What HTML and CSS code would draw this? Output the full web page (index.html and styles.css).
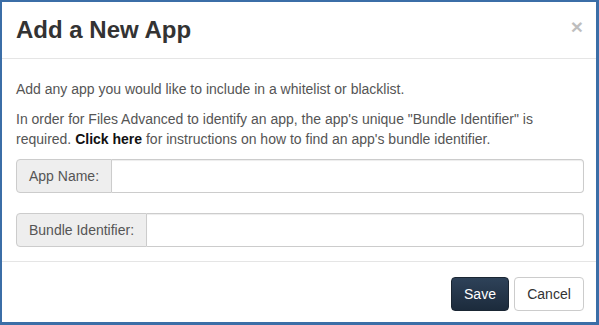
FILE: index.html
```html
<!DOCTYPE html>
<html>
<head>
<meta charset="utf-8">
<link rel="stylesheet" href="styles.css">
</head>
<body>
<div class="modal">
  <div class="modal-header">
    <button class="close" type="button">&times;</button>
    <h4 class="modal-title">Add a New App</h4>
  </div>
  <div class="modal-body">
    <p>Add any app you would like to include in a whitelist or blacklist.</p>
    <p>In order for Files Advanced to identify an app, the app's unique "Bundle Identifier" is required. <a class="link" href="#">Click here</a> for instructions on how to find an app's bundle identifier.</p>
    <div class="input-group first">
      <span class="addon">App Name:</span>
      <input class="field" type="text">
    </div>
    <div class="input-group">
      <span class="addon">Bundle Identifier:</span>
      <input class="field" type="text">
    </div>
  </div>
  <div class="modal-footer">
    <button class="btn btn-primary" type="button">Save</button>
    <button class="btn btn-default" type="button">Cancel</button>
  </div>
</div>
</body>
</html>
```
FILE: styles.css
```css
* { box-sizing: border-box; }
html, body { margin: 0; padding: 0; }
body {
  font-family: "Liberation Sans", Arial, sans-serif;
  font-size: 14px;
  line-height: 20px;
  color: #555;
  background: #fff;
}
.modal {
  width: 599px;
  height: 325px;
  border-style: solid;
  border-color: #3b6ea7;
  border-width: 2px 3px 3px 2px;
  background: #fff;
  display: flex;
  flex-direction: column;
}
.modal-header {
  padding: 15px 12px 15px 14px;
  border-bottom: 1px solid #e5e5e5;
  display: flex;
  flex-direction: row-reverse;
  justify-content: space-between;
  align-items: flex-start;
}
.modal-title {
  margin: 0;
  font-size: 24px;
  font-weight: bold;
  line-height: 26px;
  color: #333;
}
.close {
  background: none;
  border: 0;
  padding: 0;
  margin-top: -1px;
  margin-right: 1px;
  font-family: "Liberation Sans", Arial, sans-serif;
  font-size: 21px;
  font-weight: bold;
  line-height: 1;
  color: #000;
  opacity: 0.25;
  cursor: pointer;
}
.modal-body {
  padding: 20px 12px 14px 14px;
}
.modal-body p { margin: 0 0 10px; }
.link {
  color: #111;
  font-weight: bold;
  text-decoration: none;
}
.input-group {
  display: flex;
  height: 34px;
}
.input-group.first { margin-bottom: 20px; }
.addon {
  display: flex;
  align-items: center;
  padding: 0 12px;
  background: #eee;
  border: 1px solid #ccc;
  border-radius: 4px 0 0 4px;
  color: #555;
  white-space: nowrap;
}
.field {
  flex: 1;
  border: 1px solid #ccc;
  border-left: 0;
  border-radius: 0 4px 4px 0;
  box-shadow: inset 0 1px 1px rgba(0,0,0,.075);
  font-family: inherit;
  font-size: 14px;
  padding: 6px 12px;
  min-width: 0;
}
.modal-footer {
  border-top: 1px solid #e5e5e5;
  padding: 15px 12px 15px 14px;
  display: flex;
  justify-content: flex-end;
  gap: 5px;
}
.btn {
  height: 34px;
  padding: 6px 12px;
  font-family: "Liberation Sans", Arial, sans-serif;
  font-size: 14px;
  line-height: 20px;
  border-radius: 4px;
  border: 1px solid #ccc;
  cursor: pointer;
}
.btn-primary {
  background: linear-gradient(#2e4259, #1c2b3c);
  border-color: #1a2633;
  color: #fff;
  width: 58px;
}
.btn-default {
  background: #fff;
  color: #333;
  width: 70px;
}
```
